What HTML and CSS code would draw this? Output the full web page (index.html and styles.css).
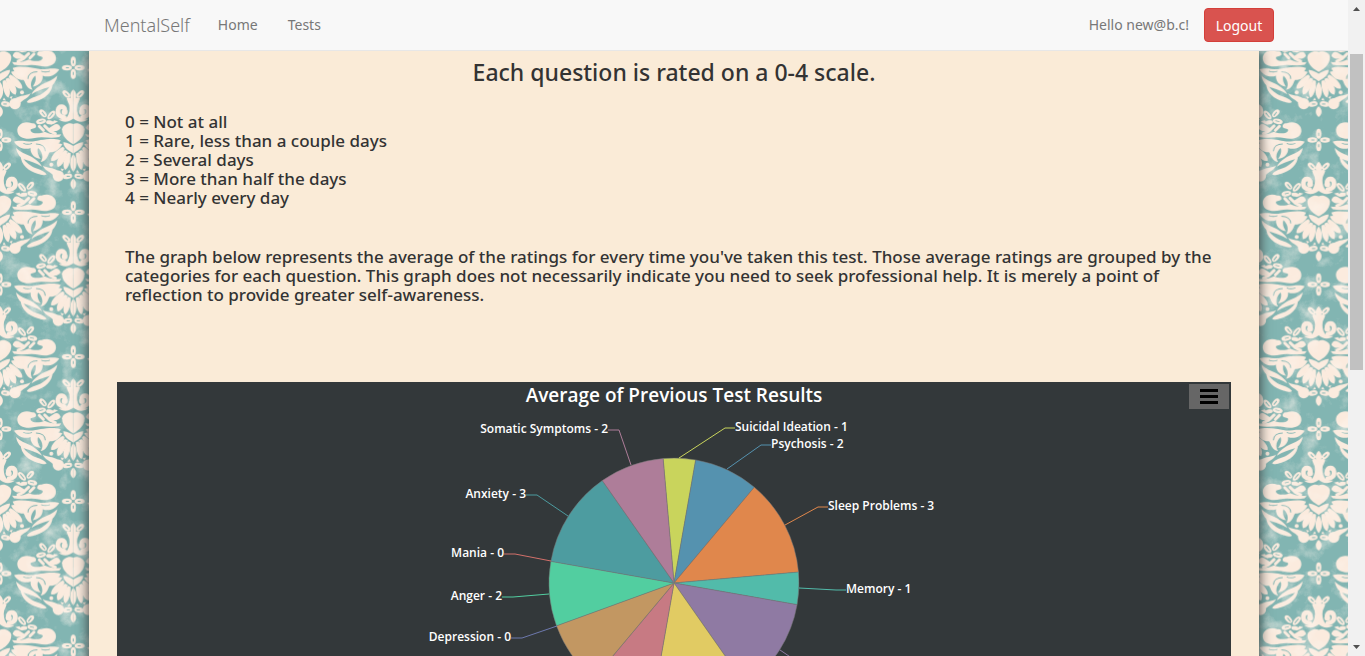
FILE: index.html
```html
<!DOCTYPE html>
<html lang="en">
<head>
<meta charset="utf-8">
<meta name="viewport" content="width=device-width, initial-scale=1">
<title>MentalSelf</title>
<link rel="stylesheet" href="styles.css">
</head>
<body>
<div class="page">
  <svg class="wallpaper" aria-hidden="true">
    <defs>
      <g id="petal4">
        <ellipse cy="-19" rx="8" ry="15"/><ellipse cy="19" rx="8" ry="15"/>
        <ellipse cx="-19" rx="15" ry="8"/><ellipse cx="19" rx="15" ry="8"/>
        <g class="vein"><path d="M0-22V-13M0 22V13M-22 0H-13M22 0H13"/></g>
      </g>
      <g id="half">
        <ellipse cx="-21" cy="34" rx="14" ry="8" transform="rotate(42 -21 34)"/>
        <path class="vein" d="M-24 31L-16 39"/>
        <path d="M0 20C-9 28-11 38-8 46C-12 44-18 44-20 47C-18 56-13 62-12 68C-10 80-12 92-18 102C-24 110-34 110-44 110C-34 120-12 120 0 108Z"/>
        <path class="curl" d="M-25 84C-24 70-43 67-46 83C-48 97-38 103-27 104"/>
        <circle cx="-26" cy="88" r="9"/>
        <path d="M0 124C-12 118-32 126-34 140C-34 165-12 178 0 185Z"/>
        <path d="M0 190C-8 186-18 178-30 179C-30 198-8 206 0 213Z"/>
        <path d="M-33 185C-44 177-68 187-78 208C-60 212-42 204-33 185Z"/>
        <path d="M-31 192C-46 200-68 216-67 234C-50 240-32 214-26 198Z"/>
        <path d="M-25 202C-42 216-55 236-47 253C-34 254-20 226-17 206Z"/>
        <path d="M-16 209C-28 226-35 248-25 262C-12 256-7 230-8 212Z"/>
        <path d="M0 215C-10 226-15 252 0 268Z"/>
        <path d="M-12 262L-18 271L-8 269Z"/><path d="M-38 257L-34 266L-28 260Z"/>
        <ellipse cx="-17" cy="281" rx="14" ry="8" transform="rotate(-12 -17 281)"/>
        <path class="vein" d="M-20 281H-10"/>
        <path d="M0 288C-11 296-12 312 0 320Z"/>
        <ellipse cx="-91" cy="92" rx="14" ry="8" transform="rotate(48 -91 92)"/>
        <ellipse cx="-66" cy="97" rx="8" ry="16" transform="rotate(42 -66 97)"/>
        <ellipse cx="-97" cy="116" rx="15" ry="8" transform="rotate(-12 -97 116)"/>
        <ellipse cx="-71" cy="119" rx="11" ry="6" transform="rotate(10 -71 119)"/>
        <g class="vein"><path d="M-94 88L-85 99M-61 91L-72 104M-102 117L-90 114"/></g>
        <path d="M-60 128C-50 120-42 124-38 136C-44 146-62 150-76 138Z"/>
        <path d="M-68 126L-58 113L-46 116L-58 123Z"/>
        <path class="strand" d="M-86 130L-70 145L-54 153M-102 131L-90 143"/>
        <path d="M-124 122C-148 112-170 126-168 146C-166 168-138 172-116 166C-94 161-68 168-42 163L-36 155C-62 158-74 151-86 147C-104 156-126 152-128 144C-130 136-118 140-112 134C-110 126-116 120-124 122Z"/>
        <path d="M-178 177C-160 170-132 179-118 176C-92 170-56 165-38 173C-40 186-66 196-74 214C-78 226-86 238-98 238C-88 224-94 206-106 196C-110 210-104 220-98 229C-120 226-130 210-128 196C-144 202-164 198-178 177Z"/>
        <path class="vein" d="M-112 184C-96 184-84 192-84 206M-150 182C-140 186-130 185-124 182"/>
        <path d="M-172 196C-168 216-158 228-144 231C-128 235-112 241-94 252C-102 236-120 225-132 219C-146 214-158 208-172 196Z"/>
        <path d="M-158 218C-158 248-134 266-106 274C-98 276-90 280-80 275C-88 261-110 259-124 251C-140 243-148 232-158 218Z"/>
        <circle cx="-45" cy="280" r="17"/>
        <path d="M-92 248C-80 257-60 253-46 264L-36 272L-56 282C-70 264-84 266-92 248Z"/>
        <circle cx="-66" cy="246" r="6"/>
      </g>
      <g id="damask">
        <use href="#petal4" y="-45"/>
        <use href="#half"/>
        <use href="#half" transform="scale(-1 1)"/>
      </g>
      <pattern id="wall" width="440" height="434" patternUnits="userSpaceOnUse" patternTransform="translate(0 140) scale(.333)">
        <rect class="wall-base" width="440" height="434"/>
        <g class="wall-ink">
          <use href="#damask" x="0" y="45"/>
          <use href="#damask" x="440" y="45"/>
          <use href="#damask" x="0" y="479"/>
          <use href="#damask" x="440" y="479"/>
          <use href="#damask" x="220" y="-172"/>
          <use href="#damask" x="220" y="262"/>
        </g>
      </pattern>
      <filter id="grain" x="0" y="0" width="100%" height="100%">
        <feTurbulence type="fractalNoise" baseFrequency=".05" numOctaves="5" seed="4"/>
        <feColorMatrix values="0 0 0 0 .98  0 0 0 0 .92  0 0 0 0 .86  1.4 0 0 0 -.7"/>
      </filter>
    </defs>
    <rect width="100%" height="100%" fill="url(#wall)"/>
    <rect width="100%" height="100%" filter="url(#grain)"/>
  </svg>

  <nav class="navbar">
    <div class="navbar-row">
      <a class="brand" href="#">MentalSelf</a>
      <a class="nav-link" href="#">Home</a>
      <a class="nav-link" href="#">Tests</a>
      <span class="greeting">Hello new@b.c!</span>
      <button class="logout" type="button">Logout</button>
    </div>
  </nav>

  <main class="container content">
    <h1 class="headline">Each question is rated on a 0-4 scale.</h1>
    <ul class="scale">
      <li>0 = Not at all</li>
      <li>1 = Rare, less than a couple days</li>
      <li>2 = Several days</li>
      <li>3 = More than half the days</li>
      <li>4 = Nearly every day</li>
    </ul>
    <p class="about">The graph below represents the average of the ratings for every time you've taken this test. Those average ratings are grouped by the categories for each question. This graph does not necessarily indicate you need to seek professional help. It is merely a point of reflection to provide greater self-awareness.</p>

    <section class="chart">
      <h2 class="chart-title">Average of Previous Test Results</h2>
      <button class="chart-menu" type="button" aria-label="Chart menu">
        <svg width="18" height="15" viewBox="0 0 18 15" aria-hidden="true"><path d="M0 0h18v3H0zM0 6h18v3H0zM0 12h18v3H0z"/></svg>
      </button>
      <svg class="pie" viewBox="0 0 1114 400" role="img" aria-label="Average of previous test results">
        <g class="slices">
          <path fill="#c9d45c" d="M557 201L546.1 76.5A125 125 0 0 1 578.7 77.9Z"/>
          <path fill="#5592af" d="M557 201L578.7 77.9A125 125 0 0 1 637.3 105.2Z"/>
          <path fill="#e0874c" d="M557 201L637.3 105.2A125 125 0 0 1 681.5 190.1Z"/>
          <path fill="#52bbaa" d="M557 201L681.5 190.1A125 125 0 0 1 680.1 222.7Z"/>
          <path fill="#8f7aa3" d="M557 201L680.1 222.7A125 125 0 0 1 628.7 303.4Z"/>
          <path fill="#e1cb63" d="M557 201L628.7 303.4A125 125 0 0 1 535.3 324.1Z"/>
          <path fill="#c77a83" d="M557 201L535.3 324.1A125 125 0 0 1 476.7 296.8Z"/>
          <path fill="#c29762" d="M557 201L476.7 296.8A125 125 0 0 1 439.5 243.8Z"/>
          <path fill="#52cea0" d="M557 201L439.5 243.8A125 125 0 0 1 433.9 179.3Z"/>
          <path fill="#4d9ca0" d="M557 201L433.9 179.3A125 125 0 0 1 485.3 98.6Z"/>
          <path fill="#ae7d99" d="M557 201L485.3 98.6A125 125 0 0 1 546.1 76.5Z"/>
        </g>
        <g class="leaders">
          <path stroke="#ae7d99" d="M491 48H502L514 83"/>
          <path stroke="#4d9ca0" d="M409 113H420L451 134"/>
          <path stroke="#d3706a" d="M387 172H398L434 179"/>
          <path stroke="#52cea0" d="M385 215H396L432 212"/>
          <path stroke="#6d78ad" d="M394 256H405L440 244"/>
          <path stroke="#c9d45c" d="M618 46H608L562 76"/>
          <path stroke="#5592af" d="M654 63H644L610 87"/>
          <path stroke="#e0874c" d="M711 125H701L668 143"/>
          <path stroke="#52bbaa" d="M729 208H719L682 206"/>
          <path stroke="#8f7aa3" d="M663 268L700 293H711"/>
        </g>
        <g class="labels labels-left">
          <text x="491" y="51">Somatic Symptoms - 2</text>
          <text x="409" y="116">Anxiety - 3</text>
          <text x="387" y="175">Mania - 0</text>
          <text x="385" y="218">Anger - 2</text>
          <text x="394" y="259">Depression - 0</text>
        </g>
        <g class="labels">
          <text x="618" y="49">Suicidal Ideation - 1</text>
          <text x="654" y="66">Psychosis - 2</text>
          <text x="711" y="128">Sleep Problems - 3</text>
          <text x="729" y="211">Memory - 1</text>
        </g>
      </svg>
    </section>
  </main>
</div>
<div class="scrollbar" aria-hidden="true">
  <svg class="arrow" width="7" height="4" viewBox="0 0 7 4"><path d="M0 4L3.500 0L7 4Z"/></svg>
  <div class="track"><div class="thumb"></div></div>
  <svg class="arrow" width="7" height="4" viewBox="0 0 7 4"><path d="M0 0L3.500 4L7 0Z"/></svg>
</div>
</body>
</html>
```
FILE: styles.css
```css
* {
  box-sizing: border-box;
}

body {
  margin: 0;
  height: 100vh;
  display: grid;
  grid-template-columns: minmax(0, 1fr) 17px;
  overflow: hidden;
  color: #333;
  font-family: "Noto Sans", "Open Sans", sans-serif;
  font-size: 14px;
  line-height: 20px;
}

.page {
  position: relative;
  height: 100vh;
  overflow: hidden;
}

.container {
  width: 100%;
  max-width: 1170px;
  margin: 0 auto;
}

/* Damask wallpaper behind the page */
.wallpaper {
  position: absolute;
  inset: 0;
  width: 100%;
  height: 100%;
}

.wall-base {
  fill: #82b5b2;
}

.wall-ink {
  fill: #fbebde;
}

.vein {
  fill: none;
  stroke: #82b5b2;
  stroke-width: 3;
}

.curl {
  fill: none;
  stroke: #fbebde;
  stroke-width: 14;
  stroke-linecap: round;
}

.strand {
  fill: none;
  stroke: #fbebde;
  stroke-width: 9;
  stroke-linecap: round;
}

/* Top bar */
.navbar {
  position: relative;
  z-index: 1;
  background: #f8f8f8;
  border-bottom: 1px solid #e7e7e7;
}

.navbar-row {
  display: flex;
  align-items: center;
  max-width: 1200px;
  height: 50px;
  margin: 0 auto;
  padding-left: 30px;
}

.brand,
.nav-link {
  color: #777;
  text-decoration: none;
}

.brand {
  margin-right: 13px;
  font-size: 18px;
  font-weight: 300;
}

.nav-link {
  padding: 0 15px;
}

.nav-link,
.greeting,
.logout {
  font-size: 14px;
}

.greeting {
  margin-left: auto;
  margin-right: 15px;
  color: #777;
}

.logout {
  height: 34px;
  width: 70px;
  padding: 0;
  border: 1px solid #d43f3a;
  border-radius: 4px;
  background: #d9534f;
  color: #fff;
  font-family: inherit;
}

/* Sheet with the explanation and the chart */
.content {
  position: relative;
  min-height: 100%;
  padding: 8px 28px;
  background: #faebd7;
  box-shadow: 0 0 12px #333;
}

.headline {
  margin: 0 0 27px;
  font-size: 23px;
  font-weight: 500;
  line-height: 26px;
  text-align: center;
}

.scale,
.about {
  margin: 0;
  padding: 0 8px;
  font-size: 17px;
  font-weight: 500;
  line-height: 19px;
}

.scale {
  margin-bottom: 40px;
  list-style: none;
}

.about {
  margin-bottom: 78px;
}

/* Chart */
.chart {
  position: relative;
  height: 400px;
  background: #33383a;
  color: #fff;
}

.chart-title {
  position: absolute;
  inset: 0 0 auto;
  margin: 0;
  font-family: "Open Sans", "Noto Sans", sans-serif;
  font-size: 19px;
  font-weight: 600;
  line-height: 26px;
  text-align: center;
}

.chart-menu {
  position: absolute;
  z-index: 1;
  top: 2px;
  right: 2px;
  display: grid;
  place-items: center;
  width: 40px;
  height: 25px;
  padding: 0;
  border: 0;
  background: #666;
}

.pie {
  display: block;
  width: 100%;
  height: 400px;
}

.slices {
  stroke: #777;
  stroke-opacity: .5;
  stroke-width: 1;
}

.leaders {
  fill: none;
  stroke-width: 1;
}

.labels {
  fill: #fff;
  font-family: "Open Sans", "Noto Sans", sans-serif;
  font-size: 12px;
  font-weight: 600;
}

.labels-left {
  text-anchor: end;
}

/* Scroll rail */
.scrollbar {
  display: flex;
  flex-direction: column;
  align-items: center;
  gap: 5px;
  height: 100vh;
  padding: 7px 0;
  background: #f1f1f1;
}

.arrow {
  flex: none;
  fill: #505050;
}

.track {
  flex: 1;
  width: 13px;
  padding-top: 38px;
}

.thumb {
  height: 54%;
  background: #c1c1c1;
}
```
